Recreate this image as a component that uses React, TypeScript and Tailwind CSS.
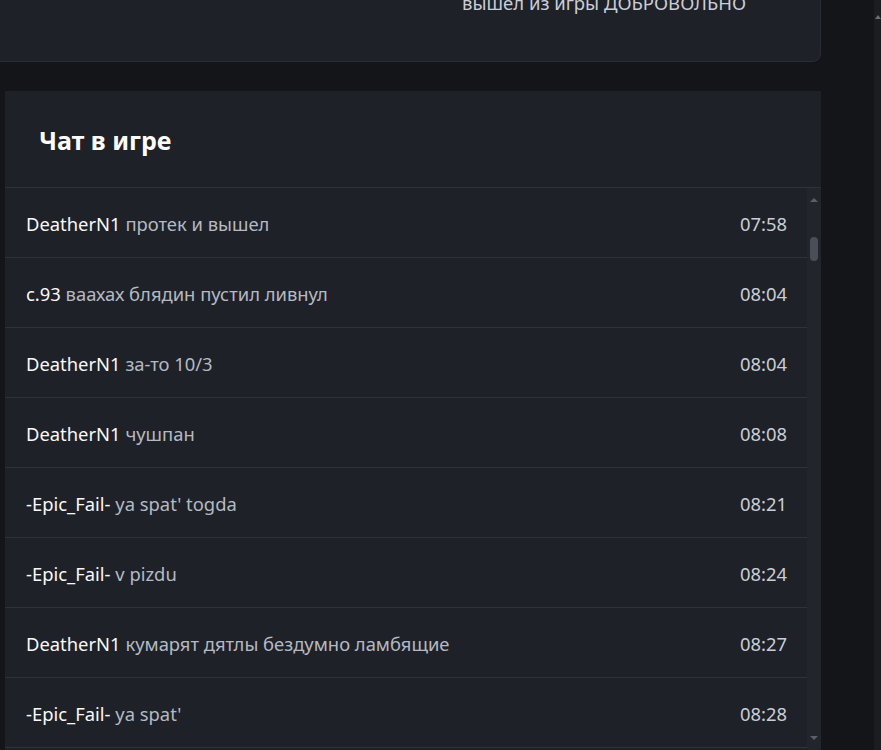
import React from "react";

interface ChatMessage {
  id: number;
  author: string;
  text: string;
  time: string;
}

const messages: ChatMessage[] = [
  { id: 1, author: "DeatherN1", text: "протек и вышел", time: "07:58" },
  { id: 2, author: "c.93", text: "ваахах блядин пустил ливнул", time: "08:04" },
  { id: 3, author: "DeatherN1", text: "за-то 10/3", time: "08:04" },
  { id: 4, author: "DeatherN1", text: "чушпан", time: "08:08" },
  { id: 5, author: "-Epic_Fail-", text: "ya spat' togda", time: "08:21" },
  { id: 6, author: "-Epic_Fail-", text: "v pizdu", time: "08:24" },
  { id: 7, author: "DeatherN1", text: "кумарят дятлы бездумно ламбящие", time: "08:27" },
  { id: 8, author: "-Epic_Fail-", text: "ya spat'", time: "08:28" },
];

function FakeScrollbar() {
  return (
    <div className="w-[14px] shrink-0 flex flex-col items-center bg-[#22252c]">
      <div className="h-[20px] flex items-center justify-center pt-[4px]">
        <div className="w-0 h-0 border-l-[4px] border-r-[4px] border-b-[4px] border-l-transparent border-r-transparent border-b-[#5b5f68]" />
      </div>
      <div className="h-[29px]" />
      <div className="w-[8px] h-[24px] rounded-full bg-[#4a4e57]" />
      <div className="flex-1" />
      <div className="h-[20px] flex items-center justify-center pb-[4px]">
        <div className="w-0 h-0 border-l-[4px] border-r-[4px] border-t-[4px] border-l-transparent border-r-transparent border-t-[#5b5f68]" />
      </div>
    </div>
  );
}

export default function App() {
  return (
    <div
      className="h-[750px] w-[881px] overflow-hidden flex bg-[#141518]"
      style={{ fontFamily: '"Noto Sans", "Open Sans", sans-serif' }}
    >
      <div className="w-[874px] shrink-0 flex flex-col">
        {/* Previous card (cut off) */}
        <div className="-ml-[12px] -mt-[40px] w-[833px] h-[102px] shrink-0 bg-[#1f2128] border border-[#2a2d35] rounded-b-lg flex justify-end">
          <div className="mt-[33px] mr-[74px] text-[18.5px] text-[#c9ced6] leading-none">
            вышел из игры ДОБРОВОЛЬНО
          </div>
        </div>

        {/* Chat card */}
        <div className="mt-[29px] ml-[5px] w-[816px] flex-1 flex flex-col bg-[#1f2128] min-h-0">
          <div className="h-[97px] shrink-0 flex items-center px-[34px] pt-[3px] border-b border-[#2f323a]">
            <h3 className="text-[25px] font-bold text-white leading-none">Чат в игре</h3>
          </div>
          <div className="flex flex-1 min-h-0">
            <div className="flex-1 flex flex-col">
              {messages.map((m) => (
                <div
                  key={m.id}
                  className="h-[70px] shrink-0 flex items-center justify-between pl-[21px] pr-[20px] pt-[2px] border-b border-[#2f323a] text-[18.4px]"
                >
                  <div>
                    <span className="text-[#f8f9fa]">{m.author}</span>{" "}
                    <span className="text-[#b4bac2]">{m.text}</span>
                  </div>
                  <span className="text-[#c9ced6]">{m.time}</span>
                </div>
              ))}
            </div>
            <FakeScrollbar />
          </div>
        </div>
      </div>

      {/* Browser scrollbar strip */}
      <div className="flex-1 bg-[#1c1d20] flex justify-end pt-[15px]">
        <div className="w-0 h-0 border-l-[3px] border-r-[3px] border-b-[4px] border-l-transparent border-r-transparent border-b-[#6b6e74]" />
      </div>
    </div>
  );
}
